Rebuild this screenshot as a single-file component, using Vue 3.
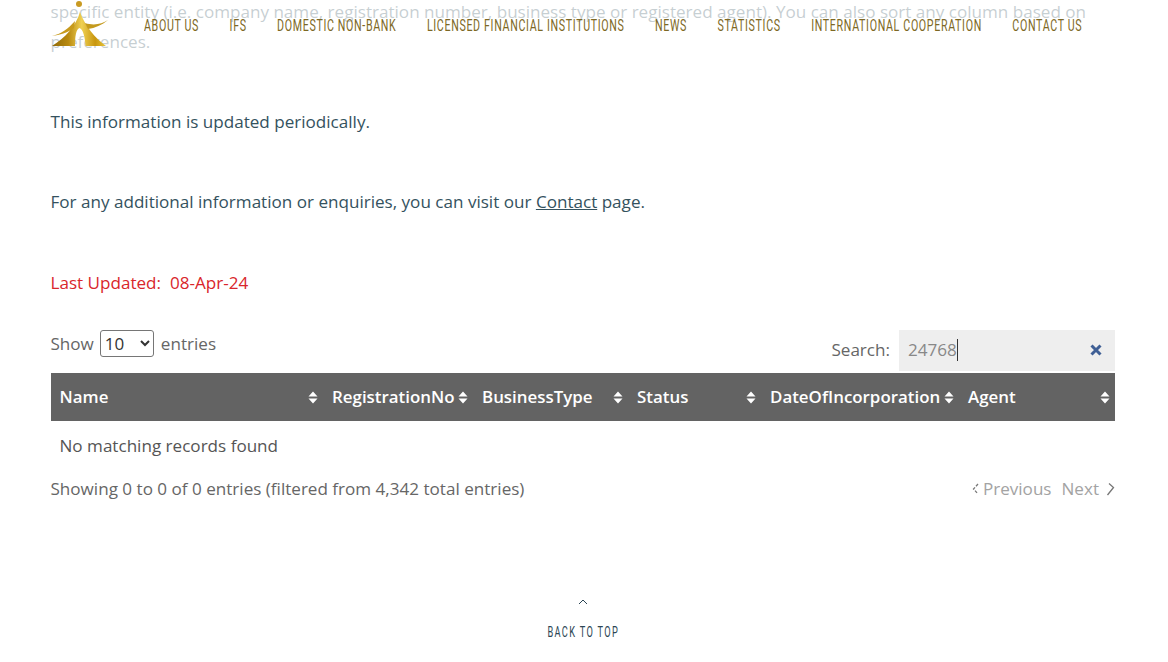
<script setup>
const nav = ['About Us', 'IFS', 'Domestic Non-Bank', 'Licensed Financial Institutions', 'News', 'Statistics', 'International Cooperation', 'Contact Us']
const columns = ['Name', 'RegistrationNo', 'BusinessType', 'Status', 'DateOfIncorporation', 'Agent']
</script>

<template>
  <div class="page">
    <header class="header">
      <svg class="logo" width="60" height="50" viewBox="0 0 60 50" aria-label="Logo">
        <defs>
          <linearGradient id="gold" x1="0" y1="0" x2="1" y2="0">
            <stop offset="0" stop-color="#8f6a08" />
            <stop offset="0.3" stop-color="#b98a10" />
            <stop offset="0.55" stop-color="#efd052" />
            <stop offset="0.8" stop-color="#c8960f" />
            <stop offset="1" stop-color="#e8c63c" />
          </linearGradient>
        </defs>
        <circle cx="29" cy="4" r="3" fill="#c99a22" />
        <path fill="url(#gold)" d="M30 12C26 26 15 38 2 46L25 46C25 37 26 29 29.500 28C33 29 35 37 35.500 46L56 46C45 38 35 26 30 12Z" />
        <path fill="#c79a1c" d="M2 36C11 34 18 29 25 21L24 28C17 33 10 35 2 36Z" />
        <path fill="#c49a1e" d="M58 20C52 25 45 28 38 29L35 23C44 26 52 24 58 20Z" />
      </svg>
      <nav class="nav">
        <a v-for="item in nav" :key="item" class="nav-link">{{ item }}</a>
      </nav>
    </header>

    <main class="main">
      <p class="para">specific entity (i.e. company name, registration number, business type or registered agent). You can also sort any column based on preferences.</p>
      <p class="para">This information is updated periodically.</p>
      <p class="para contact">For any additional information or enquiries, you can visit our <a class="link">Contact</a> page.</p>
      <p class="para updated">Last Updated:&nbsp; 08-Apr-24</p>

      <div class="controls">
        <label class="length">
          Show
          <select class="select"><option>10</option><option>25</option><option>50</option></select>
          entries
        </label>
        <div class="search">
          <span class="search-label">Search:</span>
          <div class="search-box">
            <span class="search-value">24768</span>
            <svg class="clear" width="14" height="14" viewBox="0 0 14 14">
              <path d="M2.500 2.500L11.500 11.500M11.500 2.500L2.500 11.500" stroke="#3f5f95" stroke-width="3" fill="none" />
            </svg>
          </div>
        </div>
      </div>

      <table class="table">
        <colgroup>
          <col class="c1" /><col class="c2" /><col class="c3" /><col class="c4" /><col class="c5" /><col class="c6" />
        </colgroup>
        <thead>
          <tr>
            <th v-for="col in columns" :key="col">
              <div class="th-inner">
                <span>{{ col }}</span>
                <svg class="sort" width="10" height="13" viewBox="0 0 10 13">
                  <path d="M5 .500L9.500 5.500H.500Z M5 12.500L.500 7.500H9.500Z" fill="#fff" />
                </svg>
              </div>
            </th>
          </tr>
        </thead>
        <tbody>
          <tr><td colspan="6" class="empty">No matching records found</td></tr>
        </tbody>
      </table>

      <div class="footer-row">
        <span class="info">Showing 0 to 0 of 0 entries (filtered from 4,342 total entries)</span>
        <div class="pager">
          <span class="page-btn prev">
            <svg width="8" height="14" viewBox="0 0 8 14"><path d="M6 2L1.500 7L6 12" stroke="#777" stroke-width="1.300" stroke-dasharray="3 1.500" fill="none" /></svg>
            Previous
          </span>
          <span class="page-btn next">
            Next
            <svg width="9" height="14" viewBox="0 0 9 14"><path d="M3 1.500L7.500 5.500L1.500 13" stroke="#777" stroke-width="1.300" fill="none" /></svg>
          </span>
        </div>
      </div>

      <div class="back">
        <svg width="10" height="6" viewBox="0 0 10 6"><path d="M1 5L5 1L9 5" stroke="#2c4654" stroke-width="1" fill="none" /></svg>
        <span class="back-text">BACK TO TOP</span>
      </div>
    </main>
  </div>
</template>

<style>
html, body { margin: 0; background: #fff; overflow: hidden; }
</style>

<style scoped>
.page {
  position: relative;
  height: 662px;
  overflow: hidden;
  font-family: "Open Sans", "Noto Sans", sans-serif;
  font-size: 17.08px;
  line-height: 30px;
  color: #34525e;
}
.header {
  position: absolute;
  top: 0;
  left: 0;
  right: 0;
  height: 52px;
  background: rgba(255, 255, 255, 0.72);
}
.logo { position: absolute; left: 50px; top: 0; }
.nav {
  position: absolute;
  left: 143.500px;
  top: 15px;
  display: flex;
  gap: 45.800px;
  transform: scaleX(0.665);
  transform-origin: left center;
}
.nav-link {
  font-family: "Roboto", sans-serif;
  font-size: 16px;
  font-weight: 400;
  line-height: 22px;
  letter-spacing: 1px;
  text-transform: uppercase;
  color: #7d6824;
  white-space: nowrap;
}
.main {
  margin-top: -3px;
  padding: 0 53px 0 50.500px;
}
.para { margin: 0 0 50px; }
.para.contact { margin-bottom: 51px; }
.para.updated { margin: 0; color: #d9262b; }
.link { color: #34525e; text-decoration: underline; }
.controls {
  display: flex;
  justify-content: space-between;
  align-items: flex-start;
  margin-top: 32px;
  height: 43px;
  color: #666;
}
.length { display: flex; align-items: center; gap: 6px; height: 27px; }
.select {
  width: 54px;
  height: 27px;
  margin-right: 1px;
  font-family: inherit;
  font-size: 17px;
  color: #333;
  background: #fff;
  border: 1px solid #767676;
  border-radius: 3px;
}
.search { display: flex; align-items: center; gap: 9px; height: 41px; }
.search-label { margin-bottom: 2px; }
.search-box {
  display: flex;
  align-items: center;
  justify-content: space-between;
  box-sizing: border-box;
  width: 216px;
  height: 41px;
  padding: 0 12px 2px 9px;
  background: #eee;
  color: #888;
}
.search-value {
  line-height: 22px;
  border-right: 1px solid #333;
}
.table {
  width: 100%;
  table-layout: fixed;
  border-collapse: collapse;
}
.c1 { width: 272.500px; }
.c2 { width: 150px; }
.c3 { width: 155px; }
.c4 { width: 133px; }
.c5 { width: 198px; }
.c6 { width: 156px; }
th {
  height: 48px;
  padding: 0 5px 0 9px;
  background: #636363;
  color: #fff;
  font-size: 16.900px;
  font-weight: 600;
  text-align: left;
}
.th-inner { display: flex; align-items: center; justify-content: space-between; }
.sort { flex: none; }
.empty { height: 50px; padding: 0 9px; color: #555; }
.footer-row {
  display: flex;
  justify-content: space-between;
  align-items: center;
  height: 36px;
  color: #666;
}
.pager { display: flex; gap: 10px; color: #a3a3a3; }
.page-btn { display: flex; align-items: center; }
.prev { gap: 3px; }
.next { gap: 7px; }
.back {
  display: flex;
  flex-direction: column;
  align-items: center;
  margin-top: 92px;
}
.back-text {
  margin-top: 17px;
  font-family: "Roboto", sans-serif;
  font-size: 14px;
  line-height: 20px;
  letter-spacing: 2px;
  color: #2c4654;
  transform: scaleX(0.66);
  white-space: nowrap;
}
</style>
